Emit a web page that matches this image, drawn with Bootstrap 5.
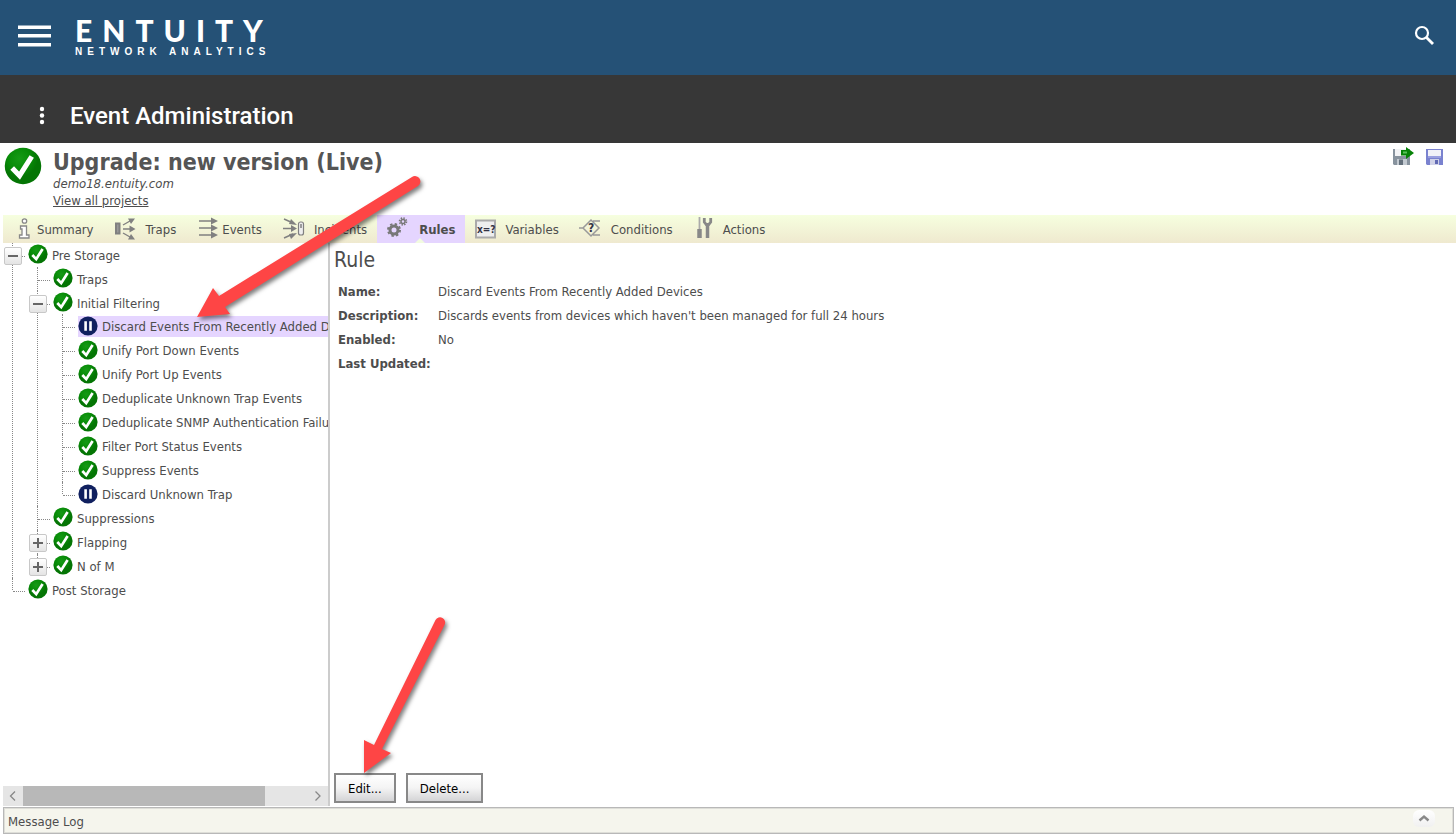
<!DOCTYPE html>
<html lang="en">
<head>
<meta charset="utf-8">
<meta name="viewport" content="width=device-width, initial-scale=1">
<title>Event Administration</title>
<link href="https://cdn.jsdelivr.net/npm/bootstrap@5.3.0/dist/css/bootstrap.min.css" rel="stylesheet">
<style>
body{font-family:"DejaVu Sans Condensed","DejaVu Sans",sans-serif;font-size:13px;line-height:24px;color:#4d4d4d}
a{color:inherit}
.topbar{background:#255176;height:75px;padding:0 16px 4px 18px}
.burger{width:33px;height:24px}
.burger svg,.finder svg,.tool svg,.kebab svg{display:block}
.brand{margin-left:24px;color:#fff;text-decoration:none}
.brand-name{font-family:Lato,sans-serif;font-weight:900;font-size:30px;line-height:32px;letter-spacing:10px}
.brand-sub{font-family:"Liberation Sans",sans-serif;font-weight:700;font-size:10px;line-height:12px;letter-spacing:5px}
.titlebar{background:#373737;height:68px;padding:14px 0 0 36px;color:#fff}
.titlebar h1{font-family:Roboto,sans-serif;font-weight:500;font-size:24px;line-height:32px;margin-left:22px}
.project{height:72px;padding:4px 11px 0 4px}
.project h2{font-size:23px;line-height:26px;font-weight:700;color:#555}
.project-info{margin-left:11px;padding-top:2px;font-size:13px;line-height:17px}
.tools{gap:11px}
.tabs{height:28px;margin-left:3px;background:linear-gradient(#f6ffdf,#efe9cf)}
.tab{display:flex;align-items:center;padding:2px 10px 0;height:28px;color:#4d4d4d;text-decoration:none;position:relative}
.tab svg{width:32px;height:24px;flex:none;margin-top:-2px}
.tab.tight svg{width:24px}
.tab.snug svg{width:30px}
.tab.roomy{padding-right:12px}
.tab.current{background:#e5d5ff;font-weight:700}
.tab.current::after{content:"";position:absolute;left:38px;bottom:0;border:5px solid transparent;border-top:0;border-bottom-color:#f2fbe0}
.side{width:327px;margin-left:3px;border-right:2px solid #ccc}
.tree,.tree ul{list-style:none;margin:0;padding:0}
.tree ul{padding-left:25px}
.tree ul ul{margin-top:-1px}
.tree li{position:relative;white-space:nowrap}
.tree li::before{content:"";position:absolute;left:9px;top:0;bottom:0;border-left:1px dotted #888}
.tree li:last-child::before{bottom:auto;height:12px}
.node{display:flex;align-items:center;height:24px;padding-left:25px;position:relative}
.node::before{content:"";position:absolute;left:10px;width:12px;top:13px;border-top:1px dotted #888}
.node svg{width:20px;height:20px;flex:none;margin-top:-2px}
.tree ul ul svg{margin-top:0}
.node a{text-decoration:none;padding-left:4px;line-height:21px;flex:1}
.node .picked{background:#e5d5ff;margin-left:-20px;padding-left:24px}
.node.on-top svg{position:relative;z-index:1}
.twist{position:absolute;left:1px;top:4px;width:18px;height:18px;border:1px solid #c8c8c8;border-radius:2px;background:linear-gradient(#fff,#e4e4e4);padding:0}
.twist::before,.twist.plus::after{content:"";position:absolute;left:3px;top:7px;width:10px;height:2px;background:#666}
.twist.plus::after{transform:rotate(90deg)}
.hbar{height:20px;background:#e5e5e5}
.hbar button{width:20px;height:20px}
.hbar .thumb{width:242px;background:#b8b8b8}
.detail{padding:0 4px 3px}
.detail h3{font-size:21px;line-height:32px;margin:1px 0 4px;font-weight:400}
.fields th{width:104px;padding:0 0 0 4px;font-weight:700}
.fields td{padding:0}
.acts{gap:10px}
.act{height:30px;padding:2px 12px 0;border:2px solid #888;border-radius:0;background:linear-gradient(#fff,#f4f4f4 50%,#d4d4d6);color:#000;font-size:13px;line-height:24px}
.log{height:27px;margin:1px 2px 1px 3px;border:1px solid #b8b8b8;box-shadow:inset 0 0 0 1px #deded8;background:#f5f5ed;padding:2px 18px 0 4px;position:relative}
.log .up{width:22px;height:17px;margin-top:-6px;background:linear-gradient(#fff,#f0f0f0)}
.pointer{position:absolute;pointer-events:none;filter:drop-shadow(2px 3px 2px rgba(0,0,0,.5));fill:#fe4545;overflow:visible;z-index:5}
</style>
</head>
<body class="d-flex flex-column min-vh-100 position-relative">
<svg width="0" height="0" class="position-absolute" aria-hidden="true">
<defs>
<radialGradient id="green" cx=".4" cy=".3"><stop offset="0" stop-color="#169a16"/><stop offset=".6" stop-color="#088c08"/><stop offset="1" stop-color="#047504"/></radialGradient>
<symbol id="ok" viewBox="0 0 20 20"><circle cx="10" cy="10" r="9.6" fill="url(#green)"/><path d="M4.300 11l3.900 4.100L14.600 5" fill="none" stroke="#fff" stroke-width="2.700"/></symbol>
<symbol id="hold" viewBox="0 0 20 20"><circle cx="10" cy="10" r="9.6" fill="#10205f"/><path d="M7.600 5.200v9.600M12.500 5.200v9.600" stroke="#fff" stroke-width="2.600"/></symbol>
</defs>
</svg>

<header class="topbar d-flex align-items-center">
<button class="burger btn p-0 border-0" aria-label="Menu"><svg width="33" height="24" fill="#fff"><path d="M0 1.500h33v3.500H0zM0 10h33v3.500H0zM0 19h33v3.500H0z"/></svg></button>
<a href="#" class="brand"><div class="brand-name">ENTUITY</div><div class="brand-sub">NETWORK ANALYTICS</div></a>
<button class="finder btn p-0 border-0 ms-auto" aria-label="Search"><svg width="32" height="32" fill="none" stroke="#fff"><circle cx="14" cy="13" r="6" stroke-width="2.200"/><path d="M18.500 17.500l6.500 6.500" stroke-width="2.800"/></svg></button>
</header>
<div class="titlebar d-flex align-items-center">
<button class="kebab btn p-0 border-0" aria-label="More"><svg width="12" height="20" fill="#fff"><circle cx="6" cy="3" r="2.200"/><circle cx="6" cy="9.500" r="2.200"/><circle cx="6" cy="16" r="2.200"/></svg></button>
<h1 class="mb-0">Event Administration</h1>
</div>

<section class="project d-flex align-items-start">
<svg width="38" height="38" aria-hidden="true"><use href="#ok"/></svg>
<div class="project-info">
<h2 class="mb-0">Upgrade: new version (Live)</h2>
<div class="fst-italic">demo18.entuity.com</div>
<div><a href="#">View all projects</a></div>
</div>
<div class="tools ms-auto d-flex">
<button class="tool btn p-0 border-0" aria-label="Save and deploy"><svg width="24" height="20"><path d="M3 2h17v16H4l-1-1z" fill="#88939e"/><path d="M5 2h12v7H5z" fill="#f2f3f5"/><path d="M7 12h10v6H7z" fill="#c3cad1"/><path d="M9 12.500h4V18H9z" fill="#64707c"/><path d="M11 3h5V0l8 6-8 6V8.500h-5z" fill="#078207"/><path d="M13 4.500h4v2h-4z" fill="#5ac15a"/></svg></button>
<button class="tool btn p-0 border-0" aria-label="Save"><svg width="20" height="20"><path d="M1 2h17v16H2l-1-1z" fill="#7a82cf"/><path d="M3 3h13v6H3z" fill="#f1f1f8"/><path d="M3 9h13v2H3z" fill="#9a9fe0"/><path d="M5 12h9v6H5z" fill="#d0d2e8"/><path d="M10 13h3v4h-3z" fill="#626ab4"/></svg></button>
</div>
</section>

<nav class="tabs d-flex" aria-label="Sections">
<a href="#" class="tab tight"><svg fill="#fff" stroke="#888" stroke-width="1.300"><circle cx="11.500" cy="4" r="2.200"/><path d="M7.500 9h6v9h2.500v3H6.500v-3H9v-6H7.500z"/></svg>Summary</a>
<a href="#" class="tab roomy"><svg fill="none" stroke="#808080" stroke-width="1.400"><path d="M2 6.500h3.500v10H2z" fill="#999" stroke-width="2"/><path d="M9 8l7-4M9 12h8M9 16l7 4"/><path d="M14 1.500l7 0-4 5.500zM15.500 8.500l6 3.500-6 3.500zM14 22.500l7 0-4-5.500z" fill="#808080" stroke="none"/></svg>Traps</a>
<a href="#" class="tab tight"><svg fill="#808080" stroke="#808080" stroke-width="1.400"><path d="M1 4h15M1 11h15M1 18h15"/><path d="M13 .500l7 3.500-7 3.500zM13 7.500l7 3.500-7 3.500zM13 14.500l7 3.500-7 3.500z" stroke="none"/></svg>Events</a>
<a href="#" class="tab"><svg fill="none" stroke="#808080" stroke-width="1.500"><path d="M2 2l9 4M1 11.500h9M2 21l9-4"/><path d="M9 2l6 6-8-1zM9 8l6 3.500-6 3.500zM9 22l6-6-8 1z" fill="#808080" stroke="none"/><rect x="16.500" y="5" width="5" height="13" rx="2" fill="#eee" stroke-width="1.200"/><path d="M19 7v4"/></svg>Incidents</a>
<a href="#" class="tab current" aria-current="page"><svg fill="none" stroke="#777"><circle cx="7" cy="13" r="4" stroke-width="3"/><circle cx="7" cy="13" r="6" stroke-width="2" stroke-dasharray="2.400 2.312"/><circle cx="16" cy="4.500" r="2" stroke-width="1.500"/><circle cx="16" cy="4.500" r="3.400" stroke-width="1.800" stroke-dasharray="1.400 1.270"/></svg>Rules</a>
<a href="#" class="tab snug"><svg><path d="M1 3.500h19v17H1z" fill="#eee" stroke="#aaa" stroke-width="2"/><text x="2" y="16" font-family="DejaVu Sans Condensed,sans-serif" font-size="10" font-weight="700" fill="#334">x=?</text></svg>Variables</a>
<a href="#" class="tab"><svg fill="none" stroke="#999" stroke-width="1.500"><path d="M0 11h4M12 3l-8 8 8 8 8-8zM14 4h7M14 18h7" /><text x="9" y="15" font-family="DejaVu Sans Condensed,sans-serif" font-size="12" font-weight="700" fill="#334" stroke="none">?</text></svg>Conditions</a>
<a href="#" class="tab snug"><svg fill="none" stroke="#888"><path d="M6.500 0v13" stroke-width="1.800" stroke="#aaa"/><path d="M6.500 12v9" stroke-width="4.500"/><path d="M14.500 7v14" stroke-width="3.500"/><path d="M11.300 1v4l2 2.500h2.400l2-2.500V1" stroke-width="2.800"/></svg>Actions</a>
</nav>

<main class="d-flex flex-grow-1">
<aside class="side d-flex flex-column flex-shrink-0">
<div class="flex-grow-1 overflow-hidden">
<ul class="tree">
<li><div class="node"><button class="twist" aria-label="Collapse"></button><svg><use href="#ok"/></svg><a href="#">Pre Storage</a></div>
<ul>
<li><div class="node"><svg><use href="#ok"/></svg><a href="#">Traps</a></div></li>
<li><div class="node"><button class="twist" aria-label="Collapse"></button><svg><use href="#ok"/></svg><a href="#">Initial Filtering</a></div>
<ul>
<li><div class="node on-top"><svg><use href="#hold"/></svg><a href="#" class="picked">Discard Events From Recently Added Devices</a></div></li>
<li><div class="node"><svg><use href="#ok"/></svg><a href="#">Unify Port Down Events</a></div></li>
<li><div class="node"><svg><use href="#ok"/></svg><a href="#">Unify Port Up Events</a></div></li>
<li><div class="node"><svg><use href="#ok"/></svg><a href="#">Deduplicate Unknown Trap Events</a></div></li>
<li><div class="node"><svg><use href="#ok"/></svg><a href="#">Deduplicate SNMP Authentication Failure</a></div></li>
<li><div class="node"><svg><use href="#ok"/></svg><a href="#">Filter Port Status Events</a></div></li>
<li><div class="node"><svg><use href="#ok"/></svg><a href="#">Suppress Events</a></div></li>
<li><div class="node"><svg><use href="#hold"/></svg><a href="#">Discard Unknown Trap</a></div></li>
</ul></li>
<li><div class="node"><svg><use href="#ok"/></svg><a href="#">Suppressions</a></div></li>
<li><div class="node"><button class="twist plus" aria-label="Expand"></button><svg><use href="#ok"/></svg><a href="#">Flapping</a></div></li>
<li><div class="node"><button class="twist plus" aria-label="Expand"></button><svg><use href="#ok"/></svg><a href="#">N of M</a></div></li>
</ul></li>
<li><div class="node"><svg><use href="#ok"/></svg><a href="#">Post Storage</a></div></li>
</ul>
</div>
<div class="hbar d-flex">
<button class="btn p-0 border-0 d-flex" aria-label="Scroll left"><svg width="20" height="20" fill="none" stroke="#888" stroke-width="1.300"><path d="M12 5.500L7.500 10l4.500 4.500"/></svg></button>
<div class="thumb"></div>
<button class="btn p-0 border-0 d-flex ms-auto" aria-label="Scroll right"><svg width="20" height="20" fill="none" stroke="#888" stroke-width="1.300"><path d="M7.500 5.500L12 10l-4.500 4.500"/></svg></button>
</div>
</aside>
<section class="detail d-flex flex-column flex-grow-1">
<h3>Rule</h3>
<table class="fields">
<tr><th scope="row">Name:</th><td>Discard Events From Recently Added Devices</td></tr>
<tr><th scope="row">Description:</th><td>Discards events from devices which haven't been managed for full 24 hours</td></tr>
<tr><th scope="row">Enabled:</th><td>No</td></tr>
<tr><th scope="row">Last Updated:</th><td></td></tr>
</table>
<div class="acts mt-auto d-flex">
<button class="act btn">Edit...</button>
<button class="act btn">Delete...</button>
</div>
</section>
</main>

<footer class="log d-flex align-items-center">
<span>Message Log</span>
<button class="up btn p-0 border-0 d-flex ms-auto" aria-label="Expand log"><svg width="22" height="17" fill="none" stroke="#888" stroke-width="2.400"><path d="M6.500 10.500L11 6.500l4.500 4"/></svg></button>
<svg class="pointer" style="left:360px;bottom:60px" width="86" height="156" aria-hidden="true"><path d="M0 156L0 123L10 128L71.500 3A5 5 0 0 1 80.500 8L18 132L27 136z"/></svg>
</footer>
<svg class="pointer" style="left:197px;top:176px" width="224" height="141" aria-hidden="true"><path d="M0 141L16 112L22 120L215 1A5 5 0 0 1 221 10L28 131L33 138z"/></svg>
<script src="https://cdn.jsdelivr.net/npm/bootstrap@5.3.0/dist/js/bootstrap.bundle.min.js"></script>
</body>
</html>
